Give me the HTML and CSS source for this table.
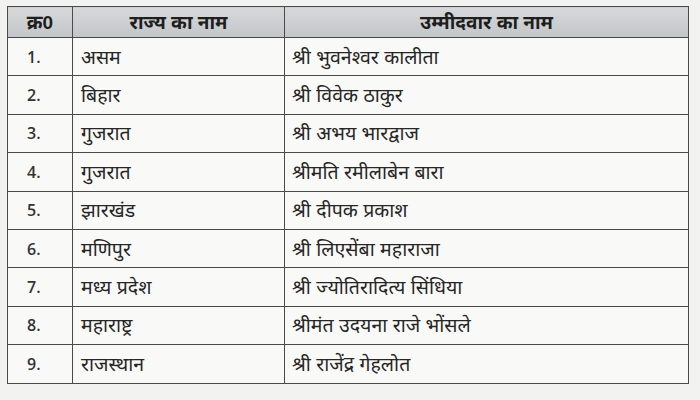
FILE: index.html
```html
<!DOCTYPE html>
<html lang="hi">
<head>
<meta charset="utf-8">
<link rel="stylesheet" href="styles.css">
</head>
<body>
<table class="list">
  <colgroup><col class="c1"><col class="c2"><col class="c3"></colgroup>
  <thead>
    <tr><th>क्र0</th><th>राज्य का नाम</th><th>उम्मीदवार का नाम</th></tr>
  </thead>
  <tbody>
    <tr><td class="num">1.</td><td>असम</td><td>श्री भुवनेश्वर कालीता</td></tr>
    <tr><td class="num">2.</td><td>बिहार</td><td>श्री विवेक ठाकुर</td></tr>
    <tr><td class="num">3.</td><td>गुजरात</td><td>श्री अभय भारद्वाज</td></tr>
    <tr><td class="num">4.</td><td>गुजरात</td><td>श्रीमति रमीलाबेन बारा</td></tr>
    <tr><td class="num">5.</td><td>झारखंड</td><td>श्री दीपक प्रकाश</td></tr>
    <tr><td class="num">6.</td><td>मणिपुर</td><td>श्री लिएसेंबा महाराजा</td></tr>
    <tr><td class="num">7.</td><td>मध्य प्रदेश</td><td>श्री ज्योतिरादित्य सिंधिया</td></tr>
    <tr><td class="num">8.</td><td>महाराष्ट्र</td><td>श्रीमंत उदयना राजे भोंसले</td></tr>
    <tr><td class="num">9.</td><td>राजस्थान</td><td>श्री राजेंद्र गेहलोत</td></tr>
  </tbody>
</table>
</body>
</html>
```
FILE: styles.css
```css
html, body {
  margin: 0;
  padding: 0;
  background: #f2f2f0;
}
body {
  padding: 6px 0 0 7px;
  font-family: "Liberation Sans", "Noto Sans", sans-serif;
  color: #262626;
}
.list {
  border-collapse: collapse;
  width: 682px;
  table-layout: fixed;
  background: #f9f9f8;
}
.c1 { width: 65px; }
.c2 { width: 212px; }
.list th, .list td {
  border: 1.5px solid #4a4a4a;
  padding: 0;
}
.list th {
  height: 30px;
  background: linear-gradient(#d6d8da, #c3c6c8);
  font-size: 19px;
  font-weight: bold;
  text-align: center;
  color: #1e1e1e;
  line-height: 1;
}
.list tbody tr {
  height: 38.4px;
}
.list td {
  height: 37.4px;
  font-size: 19.5px;
  line-height: 22px;
  padding-left: 8px;
  text-align: left;
  vertical-align: middle;
}
.list td:nth-child(3) {
  padding-left: 7px;
}
.list td.num {
  padding-left: 19px;
  font-family: "Open Sans", "Liberation Sans", sans-serif;
  font-size: 16px;
  line-height: 22px;
  font-weight: 600;
  color: #333;
}
```
